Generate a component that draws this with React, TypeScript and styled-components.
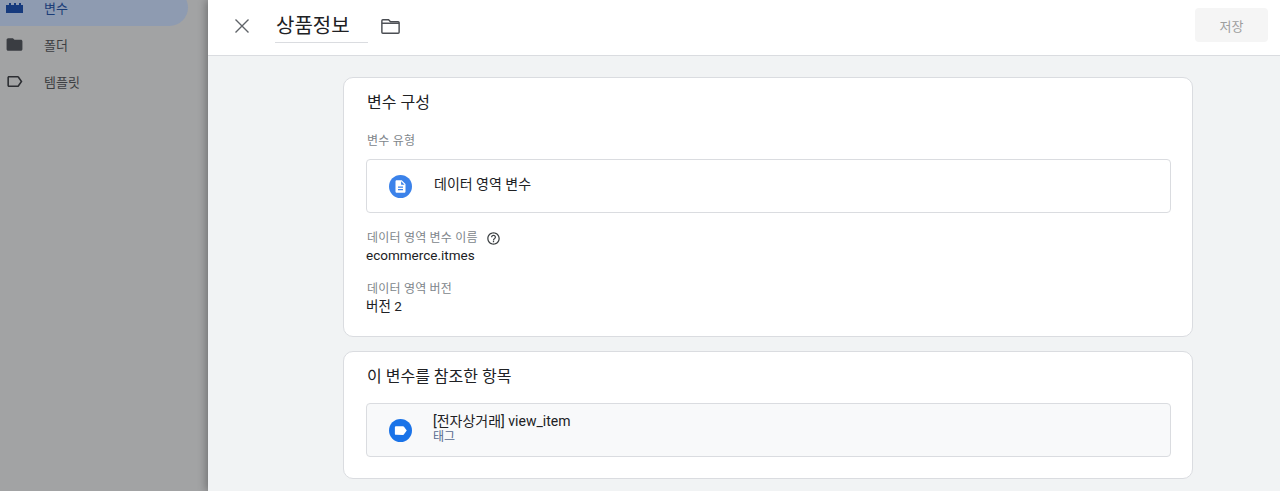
import styled, { createGlobalStyle } from "styled-components";

const GlobalStyle = createGlobalStyle`
  html, body {
    margin: 0;
    height: 100%;
    overflow: hidden;
    background: #a2a3a4;
    font-family: Roboto, "Noto Sans CJK KR", "Noto Sans", sans-serif;
    color: #202124;
  }
  #root {
    height: 100%;
  }
`;

const Page = styled.div`
  display: flex;
  height: 491px;
  overflow: hidden;
`;

const Sidebar = styled.nav`
  width: 208px;
  flex: none;
  padding-right: 20px;
  box-sizing: border-box;
  background: #a2a3a4;
`;

const NavList = styled.div`
  margin-top: -11px;
  display: flex;
  flex-direction: column;
`;

const NavItem = styled.div<{ $active?: boolean }>`
  display: flex;
  align-items: center;
  gap: 20px;
  height: 37px;
  padding-left: 5px;
  font-size: 13px;
  color: ${(p) => (p.$active ? "#1b3d78" : "#3c3e42")};
  background: ${(p) => (p.$active ? "#8e9bb1" : "transparent")};
  border-radius: 0 19px 19px 0;
`;

const NavIcon = styled.svg`
  width: 19px;
  height: 19px;
  flex: none;
`;

const Panel = styled.main`
  flex: 1;
  display: flex;
  flex-direction: column;
  background: #f1f3f4;
  box-shadow: -2px 0 8px rgba(0, 0, 0, 0.3);
`;

const TopBar = styled.header`
  height: 55px;
  flex: none;
  display: flex;
  align-items: center;
  padding: 0 12px 0 22px;
  background: #fff;
  border-bottom: 1px solid #dadce0;
`;

const CloseIcon = styled.svg`
  width: 24px;
  height: 24px;
  margin-right: 21px;
  margin-bottom: 4px;
  fill: none;
  stroke: #5f6368;
  stroke-width: 1.4;
`;

const TitleInput = styled.div`
  width: 93px;
  height: 33px;
  margin-top: 1px;
  margin-bottom: 4px;
  box-sizing: border-box;
  padding: 2px 0 0 1px;
  font-size: 20px;
  line-height: 28px;
  color: #202124;
  border-bottom: 1px solid #dadce0;
`;

const FolderIcon = styled.svg`
  width: 23px;
  height: 23px;
  margin-left: 11px;
  margin-bottom: 2px;
  fill: none;
  stroke: #4a4d52;
  stroke-width: 1.5;
`;

const SaveButton = styled.button`
  margin-left: auto;
  width: 73px;
  height: 34px;
  margin-bottom: 5px;
  border: none;
  border-radius: 4px;
  background: #f5f5f5;
  color: #9e9e9e;
  font: inherit;
  font-size: 13px;
`;

const Body = styled.div`
  flex: 1;
  display: flex;
  flex-direction: column;
  align-items: flex-start;
  gap: 14px;
  padding: 21px 0 0 135px;
  overflow: hidden;
`;

const Card = styled.section<{ $height: number }>`
  width: 850px;
  height: ${(p) => p.$height}px;
  flex: none;
  box-sizing: border-box;
  padding: 13px 21px 0 23px;
  background: #fff;
  border: 1px solid #dadce0;
  border-radius: 10px;
`;

const CardTitle = styled.h2`
  margin: 0;
  font-size: 16px;
  line-height: 24px;
  font-weight: 400;
  color: #202124;
`;

const FieldLabel = styled.div<{ $top: number }>`
  display: flex;
  align-items: center;
  gap: 8px;
  margin-top: ${(p) => p.$top}px;
  height: 16px;
  font-size: 12px;
  line-height: 16px;
  color: #80868b;
  letter-spacing: 0.2px;
`;

const HelpIcon = styled.svg`
  width: 15px;
  height: 15px;
  fill: #3c4043;
`;

const FieldValue = styled.div`
  margin-left: -1px;
  height: 18px;
  font-size: 13.5px;
  line-height: 18px;
  color: #202124;
`;

const Row = styled.div<{ $tinted?: boolean }>`
  display: flex;
  align-items: center;
  height: 54px;
  margin-left: -1px;
  margin-top: ${(p) => (p.$tinted ? "14px" : "10px")};
  box-sizing: border-box;
  padding-left: 22px;
  gap: 22px;
  border: 1px solid #dadce0;
  border-radius: 4px;
  background: ${(p) => (p.$tinted ? "#f8f9fa" : "#fff")};
`;

const RoundIcon = styled.span<{ $tone: string }>`
  width: 23px;
  height: 23px;
  flex: none;
  display: flex;
  align-items: center;
  justify-content: center;
  border-radius: 50%;
  background: ${(p) => p.$tone};
`;

const RoundGlyph = styled.svg`
  width: 15px;
  height: 15px;
  fill: #fff;
`;

const RowText = styled.div`
  font-size: 14px;
  line-height: 15px;
  color: #202124;
  margin-top: -3px;
`;

const RowStack = styled.div`
  display: flex;
  flex-direction: column;
  margin-left: -1px;
  margin-top: -2px;
`;

const RowName = styled.div`
  font-size: 14px;
  line-height: 16px;
  color: #202124;
`;

const RowSub = styled.div`
  font-size: 12px;
  line-height: 16px;
  color: #56688f;
`;

export default function App() {
  return (
    <>
      <GlobalStyle />
      <Page>
        <Sidebar>
          <NavList>
            <NavItem $active>
              <NavIcon viewBox="0 0 19 19" fill="#163a7d">
                <path d="M1 7h3V5h2v2h3V5h2v2h3V5h2v2h2v8H1z" />
              </NavIcon>
              변수
            </NavItem>
            <NavItem>
              <NavIcon viewBox="0 0 24 24" fill="#3a3d42">
                <path d="M10 4H4c-1.1 0-2 .9-2 2v12c0 1.1.9 2 2 2h16c1.1 0 2-.9 2-2V8c0-1.1-.9-2-2-2h-8l-2-2z" />
              </NavIcon>
              폴더
            </NavItem>
            <NavItem>
              <NavIcon viewBox="0 0 24 24" fill="#2c2e32">
                <path d="M17.63 5.84C17.27 5.33 16.67 5 16 5L5 5.01C3.9 5.01 3 5.9 3 7v10c0 1.1.9 1.99 2 1.99L16 19c.67 0 1.27-.33 1.63-.84L22 12l-4.37-6.16zM16 17H5V7h11l3.55 5L16 17z" />
              </NavIcon>
              템플릿
            </NavItem>
          </NavList>
        </Sidebar>
        <Panel>
          <TopBar>
            <CloseIcon viewBox="0 0 24 24">
              <path d="M5.5 5.5l13 13M18.5 5.5l-13 13" />
            </CloseIcon>
            <TitleInput>상품정보</TitleInput>
            <FolderIcon viewBox="0 0 24 24">
              <path d="M4 5h6l2 2h8a1 1 0 0 1 1 1v10a1 1 0 0 1-1 1H4a1 1 0 0 1-1-1V6a1 1 0 0 1 1-1z" />
              <path d="M3 8.6h18" />
            </FolderIcon>
            <SaveButton disabled>저장</SaveButton>
          </TopBar>
          <Body>
            <Card $height={260}>
              <CardTitle>변수 구성</CardTitle>
              <FieldLabel $top={18}>변수 유형</FieldLabel>
              <Row>
                <RoundIcon $tone="#3b82ea">
                  <RoundGlyph viewBox="0 0 24 24">
                    <path d="M14 2H6c-1.1 0-1.99.9-1.99 2L4 20c0 1.1.89 2 1.99 2H18c1.1 0 2-.9 2-2V8l-6-6zm2 16H8v-2h8v2zm0-4H8v-2h8v2zm-3-5V3.5L18.5 9H13z" />
                  </RoundGlyph>
                </RoundIcon>
                <RowText>데이터 영역 변수</RowText>
              </Row>
              <FieldLabel $top={17}>
                데이터 영역 변수 이름
                <HelpIcon viewBox="0 0 24 24">
                  <path d="M11 18h2v-2h-2v2zm1-16C6.48 2 2 6.48 2 12s4.48 10 10 10 10-4.48 10-10S17.52 2 12 2zm0 18c-4.41 0-8-3.59-8-8s3.59-8 8-8 8 3.59 8 8-3.59 8-8 8zm0-14c-2.21 0-4 1.79-4 4h2c0-1.1.9-2 2-2s2 .9 2 2c0 2-3 1.75-3 5h2c0-2.25 3-2.5 3-5 0-2.21-1.79-4-4-4z" />
                </HelpIcon>
              </FieldLabel>
              <FieldValue>ecommerce.itmes</FieldValue>
              <FieldLabel $top={17}>데이터 영역 버전</FieldLabel>
              <FieldValue>버전 2</FieldValue>
            </Card>
            <Card $height={128}>
              <CardTitle>이 변수를 참조한 항목</CardTitle>
              <Row $tinted>
                <RoundIcon $tone="#1a73e8">
                  <RoundGlyph viewBox="0 0 24 24">
                    <path d="M17.63 5.84C17.27 5.33 16.67 5 16 5L5 5.01C3.9 5.01 3 5.9 3 7v10c0 1.1.9 1.99 2 1.99L16 19c.67 0 1.27-.33 1.63-.84L22 12l-4.37-6.16z" />
                  </RoundGlyph>
                </RoundIcon>
                <RowStack>
                  <RowName>[전자상거래] view_item</RowName>
                  <RowSub>태그</RowSub>
                </RowStack>
              </Row>
            </Card>
          </Body>
        </Panel>
      </Page>
    </>
  );
}
